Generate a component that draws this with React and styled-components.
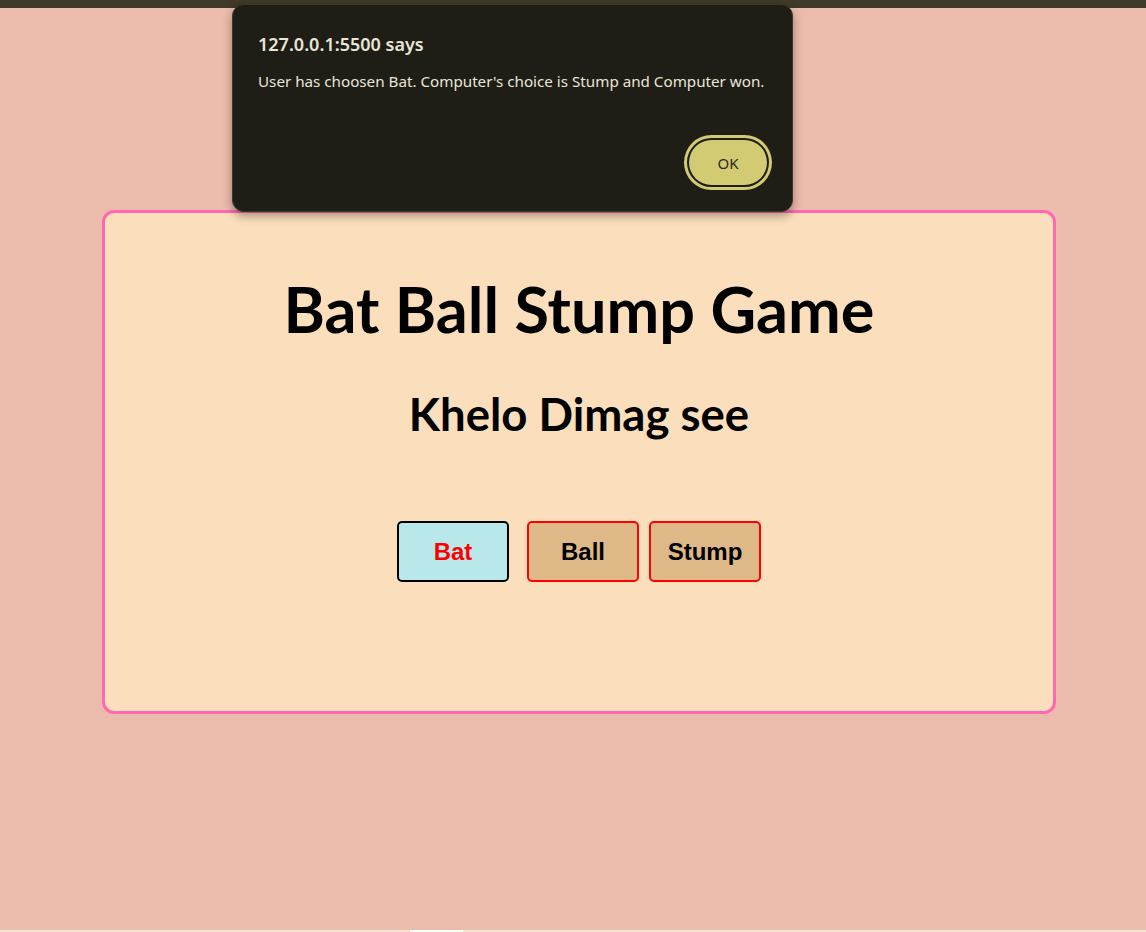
import React from 'react';
import styled, { createGlobalStyle } from 'styled-components';

const GlobalStyle = createGlobalStyle`
  html, body {
    margin: 0;
    padding: 0;
    background-color: #ebbbab;
  }
  body {
    font-family: "Liberation Sans", Arial, sans-serif;
  }
`;

const choices = [
  { name: 'Bat', selected: true },
  { name: 'Ball', selected: false },
  { name: 'Stump', selected: false },
];

const App = () => {
  return (
    <Page>
      <GlobalStyle />
      <TopBar />
      <Main>
        <GameCard>
          <Title>Bat Ball Stump Game</Title>
          <SubTitle>Khelo Dimag see</SubTitle>
          <ButtonRow>
            {choices.map(choice => (
              <ChoiceBtn key={choice.name} selected={choice.selected}>
                {choice.name}
              </ChoiceBtn>
            ))}
          </ButtonRow>
        </GameCard>
      </Main>
      <BottomEdge />
      <AlertBox>
        <AlertTitle>127.0.0.1:5500 says</AlertTitle>
        <AlertText>
          User has choosen Bat. Computer's choice is Stump and Computer won.
        </AlertText>
        <AlertFooter>
          <OkBtn>OK</OkBtn>
        </AlertFooter>
      </AlertBox>
    </Page>
  );
};

const Page = styled.div`
  position: relative;
  width: 1146px;
  height: 932px;
  overflow: hidden;
  display: flex;
  flex-direction: column;
`;

const TopBar = styled.div`
  height: 8px;
  background-color: #3f3b28;
  flex-shrink: 0;
`;

const Main = styled.div`
  flex: 1;
  padding: 202px 90px 0 102px;
`;

const BottomEdge = styled.div`
  height: 2px;
  background: linear-gradient(
    to right,
    #efe3d6 0,
    #efe3d6 410px,
    #ffffff 410px,
    #ffffff 463px,
    #efe3d6 463px
  );
`;

const GameCard = styled.div`
  box-sizing: border-box;
  height: 504px;
  background-color: #fbdebb;
  border: 3px solid #ff69b4;
  border-radius: 12px;
  display: flex;
  flex-direction: column;
  align-items: center;
`;

const Title = styled.h1`
  margin: 60px 0 0;
  font-family: Lato, "Open Sans", sans-serif;
  font-weight: 700;
  font-size: 63px;
  line-height: 72px;
  color: #000;
`;

const SubTitle = styled.h2`
  margin: 43px 0 0;
  font-family: Lato, "Open Sans", sans-serif;
  font-weight: 700;
  font-size: 45.5px;
  line-height: 52px;
  color: #000;
`;

const ButtonRow = styled.div`
  margin-top: 81px;
  display: flex;
  align-items: center;
`;

const ChoiceBtn = styled.button`
  box-sizing: border-box;
  width: 112px;
  height: 61px;
  margin: 0 ${props => (props.selected ? '18px' : '10px')} 0 0;
  &:last-child {
    margin-right: 0;
  }
  border-radius: 5px;
  border: 2px solid ${props => (props.selected ? '#000' : '#ff0000')};
  background-color: ${props => (props.selected ? '#b9e8ea' : '#deb887')};
  color: ${props => (props.selected ? '#ff0000' : '#000')};
  font-family: "Liberation Sans", Arial, sans-serif;
  font-weight: bold;
  font-size: 24px;
  padding: 0;
  cursor: pointer;
`;

const AlertBox = styled.div`
  position: absolute;
  left: 232px;
  top: 4px;
  box-sizing: border-box;
  width: 561px;
  height: 208px;
  padding: 27px 25px 26px 25px;
  background-color: #1e1d16;
  border: 1px solid #3a382c;
  border-radius: 12px;
  box-shadow: 0 4px 10px rgba(0, 0, 0, 0.35);
  color: #e9e6d7;
  font-family: "Noto Sans", "Open Sans", sans-serif;
  display: flex;
  flex-direction: column;
`;

const AlertTitle = styled.div`
  font-size: 18px;
  font-weight: 600;
  line-height: 24px;
`;

const AlertText = styled.div`
  margin-top: 15px;
  font-size: 15.2px;
  line-height: 20px;
`;

const AlertFooter = styled.div`
  margin-top: auto;
  display: flex;
  justify-content: flex-end;
`;

const OkBtn = styled.button`
  box-sizing: border-box;
  width: 78px;
  height: 45px;
  border-radius: 23px;
  border: none;
  background-color: #d2cb74;
  box-shadow: 0 0 0 2px #1e1d16, 0 0 0 5px #d2cb74;
  color: #2a2816;
  font-family: "Noto Sans", "Open Sans", sans-serif;
  font-size: 15px;
  padding: 0;
  cursor: pointer;
`;

export default App;
